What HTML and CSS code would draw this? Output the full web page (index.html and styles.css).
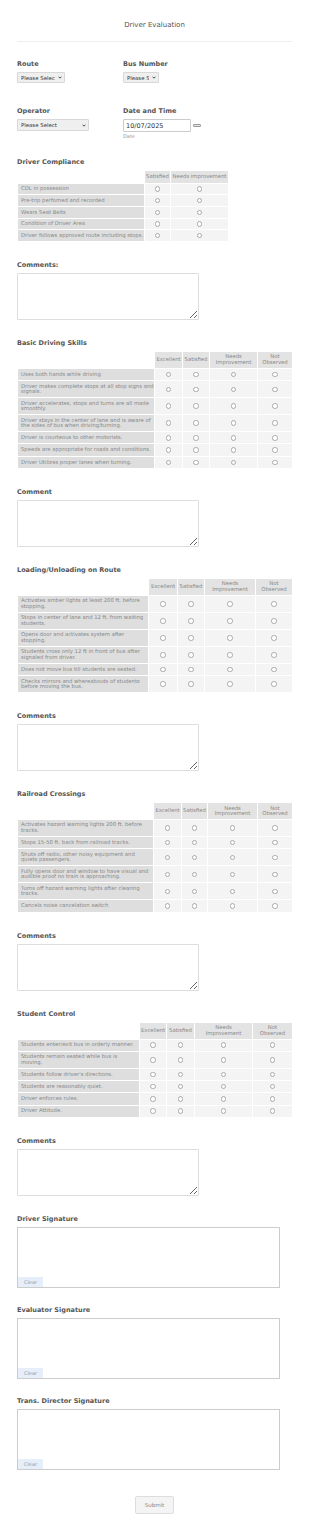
FILE: index.html
```html
<!DOCTYPE html>
<html lang="en">
<head>
<meta charset="utf-8">
<title>Driver Evaluation</title>
<link rel="stylesheet" href="styles.css">
</head>
<body>
<form class="form">
  <h1 class="title">Driver Evaluation</h1>
  <hr class="rule">

  <div class="top-grid">
    <div class="field">
      <label class="label">Route</label>
      <span class="select-wrap w-route"><select class="select"><option>Please Select</option></select><svg class="chev" viewBox="0 0 6 4"><path d="M0.8 0.8 L3 3 L5.2 0.8"/></svg></span>
    </div>
    <div class="field">
      <label class="label">Bus Number</label>
      <span class="select-wrap w-bus"><select class="select"><option>Please Select</option></select><svg class="chev" viewBox="0 0 6 4"><path d="M0.8 0.8 L3 3 L5.2 0.8"/></svg></span>
    </div>
    <div class="field">
      <label class="label">Operator</label>
      <span class="select-wrap w-op"><select class="select"><option>Please Select</option></select><svg class="chev" viewBox="0 0 6 4"><path d="M0.8 0.8 L3 3 L5.2 0.8"/></svg></span>
    </div>
    <div class="field">
      <label class="label">Date and Time</label>
      <div class="date-row">
        <input class="date-input" type="text" value="10/07/2025">
        <span class="cal"></span>
      </div>
      <span class="sublabel">Date</span>
    </div>
  </div>

  <section class="section">
    <h2 class="label">Driver Compliance</h2>
    <table class="matrix m-comp">
      <colgroup><col class="c1"><col class="c2"><col class="c3"></colgroup>
      <thead><tr><th class="blank"></th><th>Satisfied</th><th>Needs improvement</th></tr></thead>
      <tbody>
        <tr><th>CDL in possession</th><td><input class="radio" type="radio" name="dc1"></td><td><input class="radio" type="radio" name="dc1"></td></tr>
        <tr><th>Pre-trip perfomed and recorded</th><td><input class="radio" type="radio" name="dc2"></td><td><input class="radio" type="radio" name="dc2"></td></tr>
        <tr><th>Wears Seat Belts</th><td><input class="radio" type="radio" name="dc3"></td><td><input class="radio" type="radio" name="dc3"></td></tr>
        <tr><th>Condition of Driver Area</th><td><input class="radio" type="radio" name="dc4"></td><td><input class="radio" type="radio" name="dc4"></td></tr>
        <tr><th>Driver follows approved route including stops.</th><td><input class="radio" type="radio" name="dc5"></td><td><input class="radio" type="radio" name="dc5"></td></tr>
      </tbody>
    </table>
  </section>

  <section class="section">
    <h2 class="label">Comments:</h2>
    <textarea class="comments"></textarea>
  </section>

  <section class="section">
    <h2 class="label">Basic Driving Skills</h2>
    <table class="matrix m-basic">
      <colgroup><col class="c1"><col class="c2"><col class="c3"><col class="c4"><col class="c5"></colgroup>
      <thead><tr><th class="blank"></th><th>Excellent</th><th>Satisfied</th><th>Needs<br>Improvement</th><th>Not<br>Observed</th></tr></thead>
      <tbody>
        <tr><th>Uses both hands while driving</th><td><input class="radio" type="radio" name="b1"></td><td><input class="radio" type="radio" name="b1"></td><td><input class="radio" type="radio" name="b1"></td><td><input class="radio" type="radio" name="b1"></td></tr>
        <tr><th>Driver makes complete stops at all stop signs and signals.</th><td><input class="radio" type="radio" name="b2"></td><td><input class="radio" type="radio" name="b2"></td><td><input class="radio" type="radio" name="b2"></td><td><input class="radio" type="radio" name="b2"></td></tr>
        <tr><th>Driver accelerates, stops and turns are all made smoothly.</th><td><input class="radio" type="radio" name="b3"></td><td><input class="radio" type="radio" name="b3"></td><td><input class="radio" type="radio" name="b3"></td><td><input class="radio" type="radio" name="b3"></td></tr>
        <tr><th>Driver stays in the center of lane and is aware of the sides of bus when driving/turning.</th><td><input class="radio" type="radio" name="b4"></td><td><input class="radio" type="radio" name="b4"></td><td><input class="radio" type="radio" name="b4"></td><td><input class="radio" type="radio" name="b4"></td></tr>
        <tr><th>Driver is courteous to other motorists.</th><td><input class="radio" type="radio" name="b5"></td><td><input class="radio" type="radio" name="b5"></td><td><input class="radio" type="radio" name="b5"></td><td><input class="radio" type="radio" name="b5"></td></tr>
        <tr><th>Speeds are appropriate for roads and conditions.</th><td><input class="radio" type="radio" name="b6"></td><td><input class="radio" type="radio" name="b6"></td><td><input class="radio" type="radio" name="b6"></td><td><input class="radio" type="radio" name="b6"></td></tr>
        <tr><th>Driver Utilizes proper lanes when turning.</th><td><input class="radio" type="radio" name="b7"></td><td><input class="radio" type="radio" name="b7"></td><td><input class="radio" type="radio" name="b7"></td><td><input class="radio" type="radio" name="b7"></td></tr>
      </tbody>
    </table>
  </section>

  <section class="section">
    <h2 class="label">Comment</h2>
    <textarea class="comments"></textarea>
  </section>

  <section class="section">
    <h2 class="label">Loading/Unloading on Route</h2>
    <table class="matrix m-load">
      <colgroup><col class="c1"><col class="c2"><col class="c3"><col class="c4"><col class="c5"></colgroup>
      <thead><tr><th class="blank"></th><th>Excellent</th><th>Satisfied</th><th>Needs<br>Improvement</th><th>Not<br>Observed</th></tr></thead>
      <tbody>
        <tr><th>Activates amber lights at least 200 ft. before stopping.</th><td><input class="radio" type="radio" name="l1"></td><td><input class="radio" type="radio" name="l1"></td><td><input class="radio" type="radio" name="l1"></td><td><input class="radio" type="radio" name="l1"></td></tr>
        <tr><th>Stops in center of lane and 12 ft. from waiting students.</th><td><input class="radio" type="radio" name="l2"></td><td><input class="radio" type="radio" name="l2"></td><td><input class="radio" type="radio" name="l2"></td><td><input class="radio" type="radio" name="l2"></td></tr>
        <tr><th>Opens door and activates system after stopping.</th><td><input class="radio" type="radio" name="l3"></td><td><input class="radio" type="radio" name="l3"></td><td><input class="radio" type="radio" name="l3"></td><td><input class="radio" type="radio" name="l3"></td></tr>
        <tr><th>Students cross only 12 ft in front of bus after signaled from driver.</th><td><input class="radio" type="radio" name="l4"></td><td><input class="radio" type="radio" name="l4"></td><td><input class="radio" type="radio" name="l4"></td><td><input class="radio" type="radio" name="l4"></td></tr>
        <tr><th>Does not move bus till students are seated.</th><td><input class="radio" type="radio" name="l5"></td><td><input class="radio" type="radio" name="l5"></td><td><input class="radio" type="radio" name="l5"></td><td><input class="radio" type="radio" name="l5"></td></tr>
        <tr><th>Checks mirrors and whereabouts of students before moving the bus.</th><td><input class="radio" type="radio" name="l6"></td><td><input class="radio" type="radio" name="l6"></td><td><input class="radio" type="radio" name="l6"></td><td><input class="radio" type="radio" name="l6"></td></tr>
      </tbody>
    </table>
  </section>

  <section class="section">
    <h2 class="label">Comments</h2>
    <textarea class="comments"></textarea>
  </section>

  <section class="section">
    <h2 class="label">Railroad Crossings</h2>
    <table class="matrix m-rail">
      <colgroup><col class="c1"><col class="c2"><col class="c3"><col class="c4"><col class="c5"></colgroup>
      <thead><tr><th class="blank"></th><th>Excellent</th><th>Satisfied</th><th>Needs<br>Improvement</th><th>Not<br>Observed</th></tr></thead>
      <tbody>
        <tr><th>Activates hazard warning lights 200 ft. before tracks.</th><td><input class="radio" type="radio" name="r1"></td><td><input class="radio" type="radio" name="r1"></td><td><input class="radio" type="radio" name="r1"></td><td><input class="radio" type="radio" name="r1"></td></tr>
        <tr><th>Stops 15-50 ft. back from railroad tracks.</th><td><input class="radio" type="radio" name="r2"></td><td><input class="radio" type="radio" name="r2"></td><td><input class="radio" type="radio" name="r2"></td><td><input class="radio" type="radio" name="r2"></td></tr>
        <tr><th>Shuts off radio, other noisy equipment and quiets passengers.</th><td><input class="radio" type="radio" name="r3"></td><td><input class="radio" type="radio" name="r3"></td><td><input class="radio" type="radio" name="r3"></td><td><input class="radio" type="radio" name="r3"></td></tr>
        <tr><th>Fully opens door and window to have visual and audible proof no train is approaching.</th><td><input class="radio" type="radio" name="r4"></td><td><input class="radio" type="radio" name="r4"></td><td><input class="radio" type="radio" name="r4"></td><td><input class="radio" type="radio" name="r4"></td></tr>
        <tr><th>Turns off hazard warning lights after clearing tracks.</th><td><input class="radio" type="radio" name="r5"></td><td><input class="radio" type="radio" name="r5"></td><td><input class="radio" type="radio" name="r5"></td><td><input class="radio" type="radio" name="r5"></td></tr>
        <tr><th>Cancels noise cancelation switch</th><td><input class="radio" type="radio" name="r6"></td><td><input class="radio" type="radio" name="r6"></td><td><input class="radio" type="radio" name="r6"></td><td><input class="radio" type="radio" name="r6"></td></tr>
      </tbody>
    </table>
  </section>

  <section class="section">
    <h2 class="label">Comments</h2>
    <textarea class="comments"></textarea>
  </section>

  <section class="section">
    <h2 class="label">Student Control</h2>
    <table class="matrix m-stud">
      <colgroup><col class="c1"><col class="c2"><col class="c3"><col class="c4"><col class="c5"></colgroup>
      <thead><tr><th class="blank"></th><th>Excellent</th><th>Satisfied</th><th>Needs<br>Improvement</th><th>Not<br>Observed</th></tr></thead>
      <tbody>
        <tr><th>Students enter/exit bus in orderly manner.</th><td><input class="radio" type="radio" name="s1"></td><td><input class="radio" type="radio" name="s1"></td><td><input class="radio" type="radio" name="s1"></td><td><input class="radio" type="radio" name="s1"></td></tr>
        <tr><th>Students remain seated while bus is moving.</th><td><input class="radio" type="radio" name="s2"></td><td><input class="radio" type="radio" name="s2"></td><td><input class="radio" type="radio" name="s2"></td><td><input class="radio" type="radio" name="s2"></td></tr>
        <tr><th>Students follow driver's directions.</th><td><input class="radio" type="radio" name="s3"></td><td><input class="radio" type="radio" name="s3"></td><td><input class="radio" type="radio" name="s3"></td><td><input class="radio" type="radio" name="s3"></td></tr>
        <tr><th>Students are reasonably quiet.</th><td><input class="radio" type="radio" name="s4"></td><td><input class="radio" type="radio" name="s4"></td><td><input class="radio" type="radio" name="s4"></td><td><input class="radio" type="radio" name="s4"></td></tr>
        <tr><th>Driver enforces rules.</th><td><input class="radio" type="radio" name="s5"></td><td><input class="radio" type="radio" name="s5"></td><td><input class="radio" type="radio" name="s5"></td><td><input class="radio" type="radio" name="s5"></td></tr>
        <tr><th>Driver Attitude.</th><td><input class="radio" type="radio" name="s6"></td><td><input class="radio" type="radio" name="s6"></td><td><input class="radio" type="radio" name="s6"></td><td><input class="radio" type="radio" name="s6"></td></tr>
      </tbody>
    </table>
  </section>

  <section class="section">
    <h2 class="label">Comments</h2>
    <textarea class="comments"></textarea>
  </section>

  <section class="section">
    <h2 class="label">Driver Signature</h2>
    <div class="sig"><button type="button" class="clear">Clear</button></div>
  </section>

  <section class="section sig-section">
    <h2 class="label">Evaluator Signature</h2>
    <div class="sig"><button type="button" class="clear">Clear</button></div>
  </section>

  <section class="section sig-section">
    <h2 class="label">Trans. Director Signature</h2>
    <div class="sig"><button type="button" class="clear">Clear</button></div>
  </section>

  <div class="actions"><button type="submit" class="submit">Submit</button></div>
</form>
</body>
</html>
```

FILE: styles.css
```css
* { box-sizing: border-box; }

body {
  margin: 0;
  background: #fff;
  font-family: "DejaVu Sans", Verdana, sans-serif;
  color: #555;
}

.form {
  width: 310px;
  padding: 0 18px 17px 17px;
}

.title {
  margin: 21px 0 0;
  font-size: 7px;
  line-height: 8px;
  font-weight: normal;
  text-align: center;
  color: #555;
}

.rule {
  margin: 12px 0 0;
  border: 0;
  border-top: 1px solid #eee;
  height: 0;
}

.top-grid {
  display: grid;
  grid-template-columns: 106px 1fr;
  row-gap: 24px;
  margin-top: 18px;
}

.label {
  display: block;
  margin: 0 0 4px;
  font-size: 6.5px;
  line-height: 8px;
  font-weight: bold;
  color: #555;
}

.select-wrap {
  position: relative;
  display: block;
  width: max-content;
}

.select {
  -webkit-appearance: none;
  appearance: none;
  display: block;
  height: 11px;
  margin: 0;
  padding: 0 9px 0 3px;
  border: 1px solid #d8d8d8;
  border-radius: 1px;
  background: #efefef;
  font-family: inherit;
  font-size: 5.4px;
  color: #333;
}

.w-route .select { width: 48px; }
.w-bus .select { width: 36px; }
.w-op .select { width: 72px; height: 12px; }

.chev {
  position: absolute;
  right: 3px;
  top: 50%;
  width: 4px;
  height: 3px;
  margin-top: -1.5px;
  fill: none;
  stroke: #333;
  stroke-width: 1.3;
}

.date-row {
  display: flex;
  align-items: center;
  gap: 2px;
}

.date-input {
  width: 68px;
  height: 13px;
  margin: 0;
  padding: 0 2px;
  border: 1px solid #ccc;
  border-radius: 1px;
  background: #fff;
  font-family: inherit;
  font-size: 6.5px;
  color: #333;
}

.cal {
  width: 8px;
  height: 3px;
  border: 1px solid #999;
  border-radius: 1px;
  background: #e6e6e6;
}

.sublabel {
  display: block;
  margin-top: 1px;
  font-size: 5px;
  line-height: 6px;
  color: #999;
}

.section { margin-top: 19px; }
.sig-section { margin-top: 18px; }

.matrix {
  border-collapse: collapse;
  table-layout: fixed;
  font-size: 5.3px;
  line-height: 5.6px;
  color: #888;
}

.matrix th,
.matrix td {
  border: 1px solid #fff;
}

.matrix thead th {
  background: #e3e3e3;
  font-weight: normal;
  text-align: center;
  padding: 2.4px 1px;
}

.matrix thead th.blank { background: transparent; }

.matrix tbody th {
  background: #dedede;
  font-weight: normal;
  text-align: left;
  padding: 2.4px 0 2.4px 3px;
}

.matrix tbody td {
  background: #f4f4f4;
  text-align: center;
  padding: 2.9px 0;
}

.radio {
  -webkit-appearance: none;
  appearance: none;
  display: block;
  margin: 0 auto;
  width: 5.5px;
  height: 5.5px;
  border: 1px solid #aaa;
  border-radius: 50%;
  background: #fff;
}

.m-comp { width: 211px; }
.m-comp .c1 { width: 127px; }
.m-comp .c2 { width: 26px; }
.m-comp .c3 { width: 58px; }
.m-comp thead th { padding-top: 3px; padding-bottom: 3px; }
.m-comp tbody td { padding-top: 2.6px; padding-bottom: 2.6px; }

.m-basic, .m-load, .m-rail, .m-stud { width: 275px; }

.m-basic .c1 { width: 137px; }
.m-basic .c2 { width: 28px; }
.m-basic .c3 { width: 27px; }
.m-basic .c4 { width: 48px; }
.m-basic .c5 { width: 35px; }

.m-load .c1 { width: 131px; }
.m-load .c2 { width: 29px; }
.m-load .c3 { width: 27px; }
.m-load .c4 { width: 51px; }
.m-load .c5 { width: 37px; }

.m-rail .c1 { width: 136px; }
.m-rail .c2 { width: 28px; }
.m-rail .c3 { width: 26px; }
.m-rail .c4 { width: 50px; }
.m-rail .c5 { width: 35px; }
.m-rail tbody th { padding-right: 2px; }

.m-stud .c1 { width: 122px; }
.m-stud .c2 { width: 27px; }
.m-stud .c3 { width: 28px; }
.m-stud .c4 { width: 58px; }
.m-stud .c5 { width: 40px; }

.comments {
  display: block;
  width: 182px;
  height: 47px;
  margin: 0;
  border: 1px solid #ddd;
  border-radius: 1px;
  font-family: inherit;
  resize: both;
}

.sig {
  display: flex;
  flex-direction: column;
  justify-content: flex-end;
  align-items: flex-start;
  width: 263px;
  height: 61px;
  border: 1px solid #ccc;
}

.clear {
  width: 25px;
  height: 10px;
  margin: 0;
  padding: 0;
  border: 0;
  background: #e6eefa;
  font-family: inherit;
  font-size: 5px;
  color: #999;
}

.actions {
  display: flex;
  justify-content: center;
  margin-top: 26px;
}

.submit {
  width: 39px;
  height: 18px;
  margin: 0;
  padding: 0;
  border: 1px solid #ddd;
  border-radius: 2px;
  background: #f4f4f4;
  font-family: inherit;
  font-size: 5.5px;
  color: #888;
}
```
